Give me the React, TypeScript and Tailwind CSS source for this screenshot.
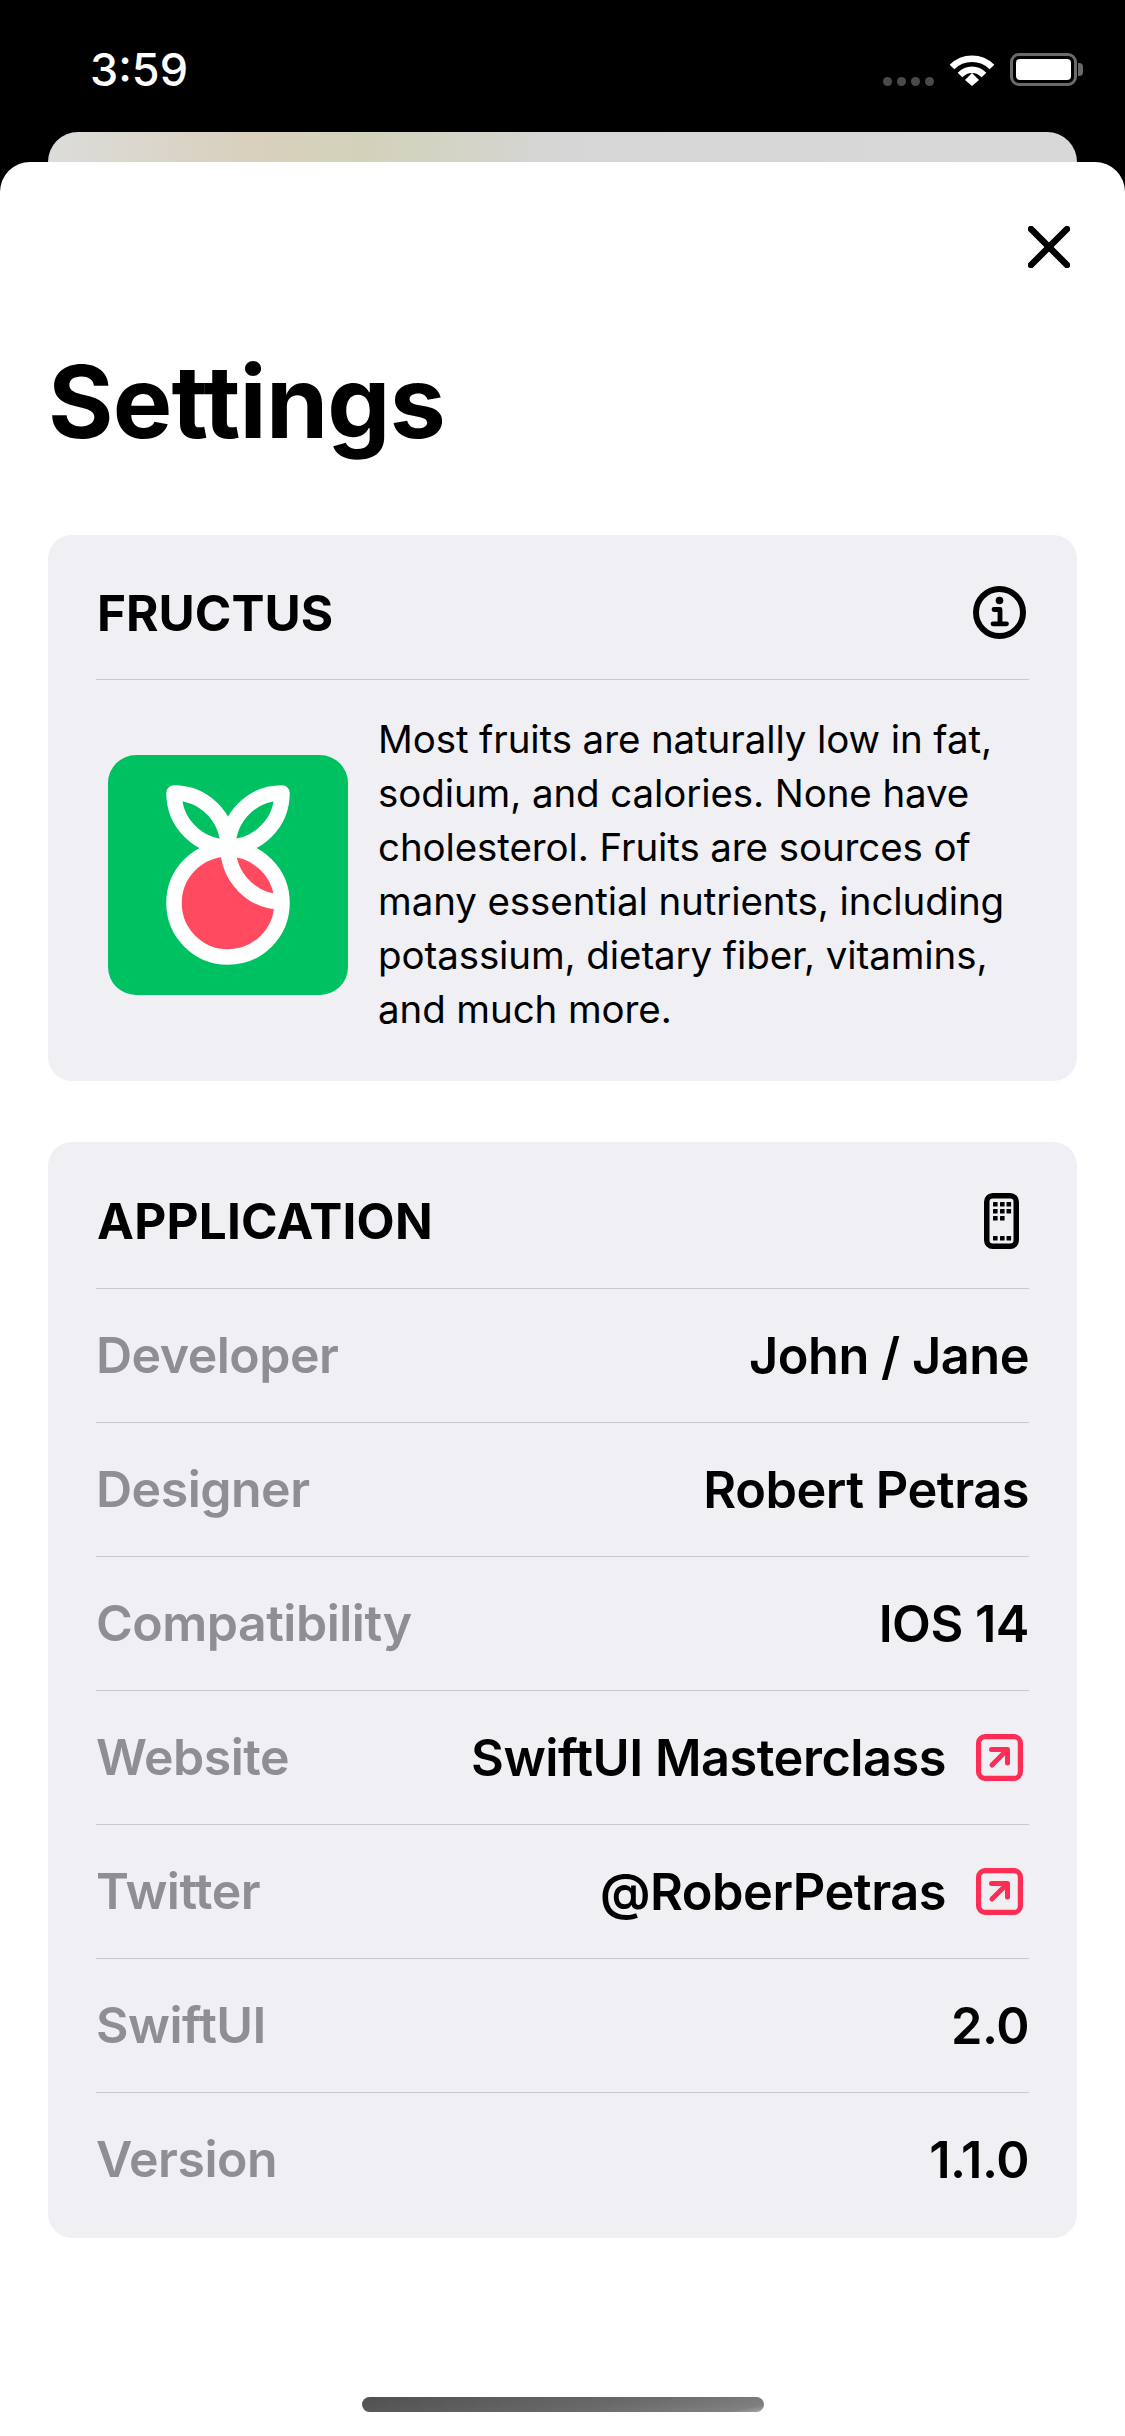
const font = { fontFamily: 'Inter, "Liberation Sans", sans-serif' };

function Wifi() {
  return (
    <svg width="46" height="33" viewBox="0 0 46 33" fill="none" stroke="#fff" strokeWidth="6.5">
      <path d="M3 14 C14 3 32 3 43 14" />
      <path d="M11 22 C18 15 28 15 35 22" />
      <path d="M16 27 L23 20 L30 27 L23 33 Z" fill="#fff" stroke="none" />
    </svg>
  );
}

function Battery() {
  return (
    <div className="flex items-center gap-[1px]">
      <div className="w-[67px] h-[33px] rounded-[9px] border-[3px] border-[#6a6a6a] p-[3px]">
        <div className="w-full h-full rounded-[4px] bg-white" />
      </div>
      <div className="w-[5px] h-[13px] rounded-r-[4px] bg-[#6a6a6a]" />
    </div>
  );
}

function Logo() {
  return (
    <svg width="240" height="240" viewBox="0 0 240 240" className="rounded-[28px] shrink-0">
      <rect width="240" height="240" fill="#00c162" />
      <circle cx="120" cy="148" r="54" fill="#ff4a5f" stroke="#fff" strokeWidth="15.5" />
      <g fill="none" stroke="#fff" strokeWidth="15.5" strokeLinejoin="round" strokeLinecap="butt">
        <path d="M66 38 C96 38 120 62 120 92 C90 92 66 68 66 38 Z" />
        <path d="M174 38 C144 38 120 62 120 92 C150 92 174 68 174 38 Z" />
        <path d="M120 92 C120 122 144 147 174 147" />
      </g>
    </svg>
  );
}

function InfoIcon() {
  return (
    <svg width="53" height="53" viewBox="0 0 53 53" fill="none" stroke="#000">
      <circle cx="26.5" cy="26.5" r="23.5" strokeWidth="6" />
      <circle cx="26.5" cy="14.5" r="3.8" fill="#000" stroke="none" />
      <path d="M21 23.5 H27 V37.5 M20 37.8 H33.5" strokeWidth="4.8" strokeLinecap="round" strokeLinejoin="round" />
    </svg>
  );
}

function PhoneIcon() {
  const dots = [
    [9, 9], [16, 9], [22.5, 9],
    [9, 16], [16, 16], [22.5, 16],
    [9, 23], [16, 23],
    [9, 43], [16, 43], [22.5, 43],
  ];
  return (
    <svg width="35" height="56" viewBox="0 0 35 56">
      <rect x="2.75" y="2.75" width="29.5" height="50.5" rx="6" fill="none" stroke="#000" strokeWidth="5.5" />
      {dots.map(([x, y], i) => (
        <rect key={i} x={x} y={y} width="4.6" height="4.6" rx="0.6" fill="#000" />
      ))}
    </svg>
  );
}

function LinkIcon() {
  return (
    <svg width="47" height="47" viewBox="0 0 47 47" fill="none" stroke="#ff2d55" strokeLinecap="round" strokeLinejoin="round">
      <rect x="2.6" y="2.6" width="41.8" height="41.8" rx="6.5" strokeWidth="5.2" />
      <path d="M15.5 15.5 H31.5 V29 M31 16 L16 31" strokeWidth="5" />
    </svg>
  );
}

function Row({ label, value, link, last }: { label: string; value: string; link?: boolean; last?: boolean }) {
  return (
    <div className={`flex items-center justify-between ${last ? 'h-[145px] pb-[12px]' : 'h-[134px] border-b border-[#c9c9cd]'}`}>
      <span className="text-[50px] font-semibold text-[#8e8e93] tracking-[-0.5px]">{label}</span>
      <span className="flex items-center gap-[30px]">
        <span className="text-[50.5px] font-semibold text-black tracking-[-0.5px]">{value}</span>
        {link && (
          <span className="flex pr-[6px]">
            <LinkIcon />
          </span>
        )}
      </span>
    </div>
  );
}

export default function App() {
  return (
    <div className="w-[1125px] h-[2436px] bg-black flex flex-col overflow-hidden" style={font}>
      <div className="h-[132px] shrink-0 flex items-start justify-between pl-[90px] pr-[42px] pt-[53px] text-white">
        <span className="text-[45px] leading-[33px] font-medium">3:59</span>
        <div className="flex items-end gap-[15px]">
          <div className="flex gap-[5px] pb-[0px]">
            <div className="w-[9px] h-[9px] rounded-full bg-[#4a4a4a]" />
            <div className="w-[9px] h-[9px] rounded-full bg-[#4a4a4a]" />
            <div className="w-[9px] h-[9px] rounded-full bg-[#4a4a4a]" />
            <div className="w-[9px] h-[9px] rounded-full bg-[#4a4a4a]" />
          </div>
          <Wifi />
          <Battery />
        </div>
      </div>

      <div className="h-[30px] shrink-0 mx-[48px] rounded-t-[30px] bg-[linear-gradient(90deg,#dcdcda_0%,#d9d0bd_20%,#d2d2b9_30%,#d6d6d6_50%,#d8d8d8_100%)]" />

      <div className="flex-1 bg-white rounded-t-[30px] flex flex-col">
        <div className="flex justify-end pt-[64px] pr-[55px]">
          <svg width="42" height="42" viewBox="0 0 42 42" fill="none" stroke="#000" strokeWidth="6.5" strokeLinecap="round">
            <path d="M3 3 L39 39 M39 3 L3 39" />
          </svg>
        </div>

        <h1 className="text-[100px] leading-[110px] font-bold text-black tracking-[-0.8px] pl-[48px] mt-[79px]">Settings</h1>

        <div className="mx-[48px] mt-[78px] h-[546px] shrink-0 bg-[#efeff4] rounded-[24px] px-[48px]">
          <div className="h-[145px] pt-[12px] flex items-center justify-between border-b border-[#c9c9cd]">
            <span className="text-[49.5px] font-bold text-black ml-[1px]">FRUCTUS</span>
            <span className="flex pr-[3px] pb-[2px]">
              <InfoIcon />
            </span>
          </div>
          <div className="flex items-center pl-[12px] pt-[33px]">
            <Logo />
            <p className="ml-[30px] -mt-[1px] text-[38.5px] leading-[54px] text-black tracking-[-0.1px] whitespace-nowrap">
              Most fruits are naturally low in fat,
              <br />
              sodium, and calories. None have
              <br />
              cholesterol. Fruits are sources of
              <br />
              many essential nutrients, including
              <br />
              potassium, dietary fiber, vitamins,
              <br />
              and much more.
            </p>
          </div>
        </div>

        <div className="mx-[48px] mt-[61px] h-[1096px] shrink-0 bg-[#efeff4] rounded-[24px] px-[48px]">
          <div className="h-[147px] pt-[12px] flex items-center justify-between border-b border-[#c9c9cd]">
            <span className="text-[49.5px] font-bold text-black ml-[1px] tracking-[0.2px]">APPLICATION</span>
            <span className="flex pr-[10px]">
              <PhoneIcon />
            </span>
          </div>
          <Row label="Developer" value="John / Jane" />
          <Row label="Designer" value="Robert Petras" />
          <Row label="Compatibility" value="IOS 14" />
          <Row label="Website" value="SwiftUI Masterclass" link />
          <Row label="Twitter" value="@RoberPetras" link />
          <Row label="SwiftUI" value="2.0" />
          <Row label="Version" value="1.1.0" last />
        </div>

        <div className="mt-auto mb-[24px] mx-auto w-[402px] h-[15px] rounded-full bg-[linear-gradient(170deg,#505050_0%,#6a6a6a_60%,#808080_92%,#a8a8a8_100%)]" />
      </div>
    </div>
  );
}
